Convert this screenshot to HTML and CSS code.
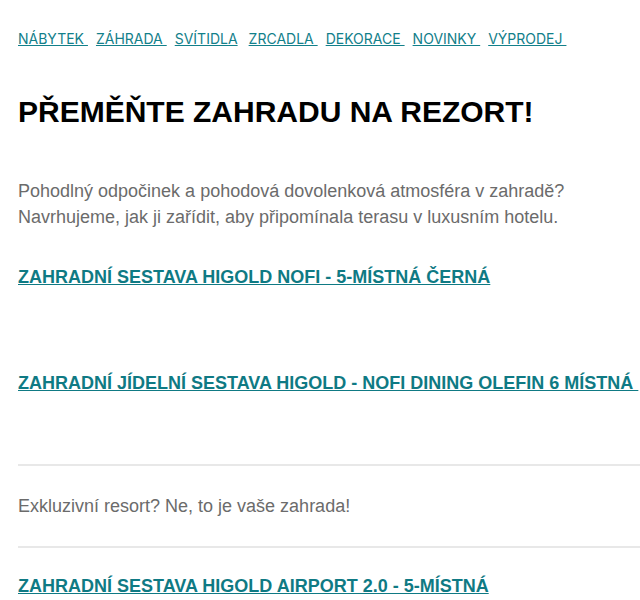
FILE: index.html
```
<!DOCTYPE html>
<html lang="cs">
<head>
<meta charset="utf-8">
<title>Přeměňte zahradu na rezort</title>
<link rel="stylesheet" href="styles.css">
</head>
<body>
<div class="page">
  <nav class="menu">
    <a href="#">NÁBYTEK </a>
    <a href="#">ZÁHRADA </a>
    <a href="#">SVÍTIDLA</a>
    <a href="#">ZRCADLA </a>
    <a href="#">DEKORACE </a>
    <a href="#">NOVINKY </a>
    <a href="#">VÝPRODEJ </a>
  </nav>
  <h1 class="title">PŘEMĚŇTE ZAHRADU NA REZORT!</h1>
  <p class="intro">Pohodlný odpočinek a pohodová dovolenková atmosféra v zahradě?<br>Navrhujeme, jak ji zařídit, aby připomínala terasu v luxusním hotelu.</p>
  <h2 class="product first"><a href="#">ZAHRADNÍ SESTAVA HIGOLD NOFI - 5-MÍSTNÁ ČERNÁ</a></h2>
  <h2 class="product second"><a href="#">ZAHRADNÍ JÍDELNÍ SESTAVA HIGOLD - NOFI DINING OLEFIN 6 MÍSTNÁ </a></h2>
  <hr class="rule">
  <p class="note">Exkluzivní resort? Ne, to je vaše zahrada!</p>
  <hr class="rule">
  <h2 class="product third"><a href="#">ZAHRADNÍ SESTAVA HIGOLD AIRPORT 2.0 - 5-MÍSTNÁ</a></h2>
</div>
</body>
</html>
```
FILE: styles.css
```
html, body {
  margin: 0;
  padding: 0;
  background: #ffffff;
}
body {
  overflow: hidden;
}
.page {
  width: 700px;
  padding: 30px 0 0 18px;
  font-family: "Liberation Sans", Arial, sans-serif;
}
.menu {
  display: flex;
  gap: 8px;
  font-family: Inter, Roboto, "Liberation Sans", sans-serif;
  font-size: 14px;
  line-height: 18px;
}
.menu a {
  color: #12808a;
  text-decoration: underline;
  white-space: pre;
}
.menu a:nth-child(3) { margin-right: 3px; }
.title {
  margin: 47px 0 0;
  font-size: 30px;
  line-height: 34px;
  font-weight: bold;
  color: #000000;
}
.intro {
  margin: 49px 0 0;
  font-size: 18px;
  line-height: 26px;
  color: #6b6b6b;
}
.product {
  margin: 0;
  font-size: 18px;
  line-height: 24px;
  font-weight: bold;
}
.product a {
  color: #0f7a84;
  text-decoration: underline;
  white-space: pre;
}
.first { margin-top: 35px; }
.second { margin-top: 82px; }
.third { margin-top: 26px; }
.rule {
  width: 640px;
  margin: 69px 0 0;
  border: 0;
  height: 2px;
  background: #e8e8e8;
}
.note {
  margin: 27px 0 0;
  font-size: 18px;
  line-height: 26px;
  color: #6b6b6b;
}
.note + .rule { margin-top: 27px; }
```
